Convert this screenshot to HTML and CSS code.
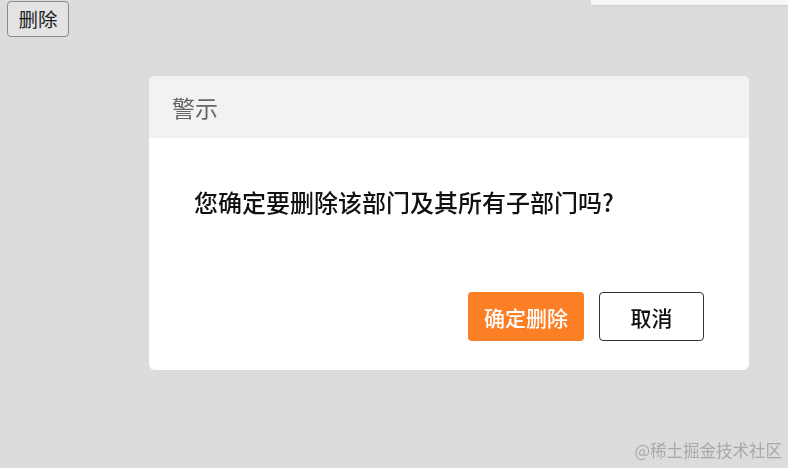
FILE: index.html
```html
<!DOCTYPE html>
<html lang="zh-CN">
<head>
  <meta charset="UTF-8">
  <meta name="viewport" content="width=device-width, initial-scale=1.0">
  <title>删除部门</title>
  <link rel="stylesheet" href="styles.css">
</head>
<body>
  <div class="topbar"></div>
  <button class="btn-open">删除</button>

  <div class="mask">
    <div class="dialog">
      <div class="dialog-header">警示</div>
      <div class="dialog-body">
        <p class="dialog-msg">您确定要删除该部门及其所有子部门吗?</p>
        <div class="dialog-actions">
          <button class="btn btn-danger">确定删除</button>
          <button class="btn btn-cancel">取消</button>
        </div>
      </div>
    </div>
  </div>

  <div class="watermark">@稀土掘金技术社区</div>
</body>
</html>
```

FILE: styles.css
```css
body {
  margin: 0;
  padding: 1px 0 0 7px;
  background-color: #dcdcdc;
  font-family: "Noto Sans CJK SC", "Noto Sans", sans-serif;
  height: 468px;
  box-sizing: border-box;
}

.topbar {
  position: absolute;
  top: 0;
  right: 0;
  width: 197px;
  height: 5px;
  background-color: #f7f7f7;
  box-shadow: 0 1px 2px rgba(0, 0, 0, 0.06);
}

.btn-open {
  font-family: "Noto Sans CJK SC", sans-serif;
  font-size: 19.5px;
  line-height: 24px;
  width: 62px;
  height: 36px;
  padding: 0;
  color: #222;
  background-color: #e3e3e3;
  border: 1px solid #8a8a8a;
  border-radius: 4px;
}

.mask {
  position: fixed;
  inset: 0;
  padding: 76px 0 0 149px;
}

.dialog {
  width: 600px;
  background-color: #fff;
  border-radius: 6px;
  overflow: hidden;
}

.dialog-header {
  height: 62px;
  line-height: 62px;
  padding-left: 23px;
  background-color: #f2f2f2;
  color: #666;
  font-size: 23px;
}

.dialog-body {
  padding: 49px 45px 29px 45px;
}

.dialog-msg {
  margin: 0;
  font-size: 24px;
  font-weight: 500;
  line-height: 30px;
  color: #111;
}

.dialog-actions {
  display: flex;
  justify-content: flex-end;
  gap: 15px;
  margin-top: 75px;
}

.btn {
  font-family: "Noto Sans CJK SC", sans-serif;
  font-size: 21px;
  font-weight: 500;
  height: 49px;
  padding: 0;
  border-radius: 4px;
  cursor: pointer;
}

.btn-danger {
  width: 116px;
  color: #fff;
  background-color: #fd7f25;
  border: none;
}

.btn-cancel {
  width: 105px;
  color: #111;
  background-color: #fff;
  border: 1px solid #333;
}

.watermark {
  position: fixed;
  right: 6px;
  bottom: 6px;
  font-size: 16.5px;
  color: #a9a9a9;
}
```
